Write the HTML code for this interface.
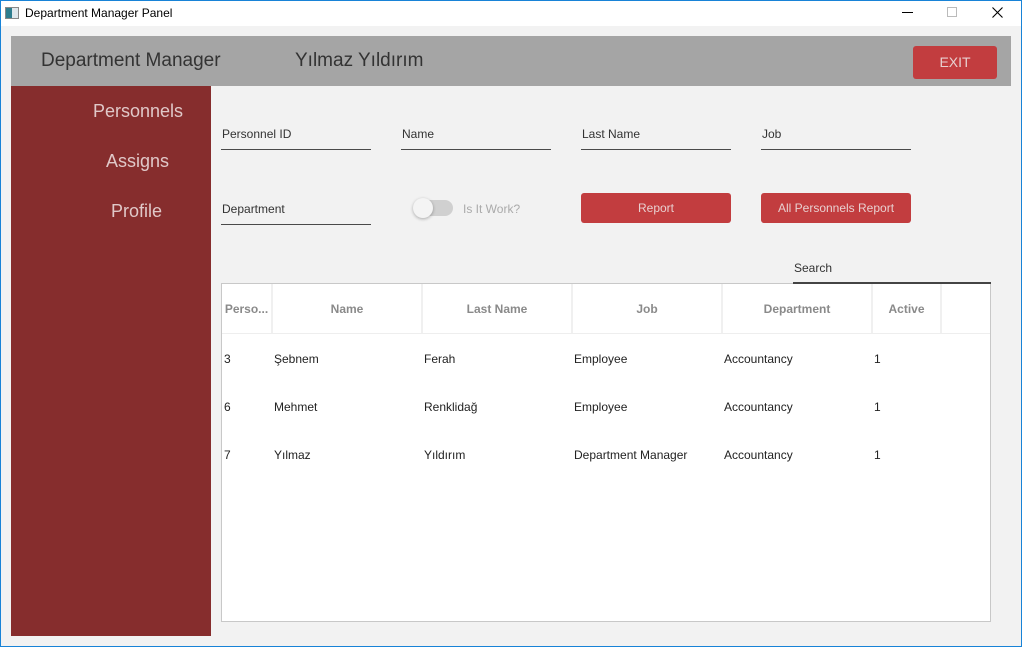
<!DOCTYPE html>
<html><head><meta charset="utf-8"><style>
*{margin:0;padding:0;box-sizing:border-box}
body{width:1022px;height:647px;position:relative;background:#f2f2f2;font-family:"Liberation Sans",sans-serif;overflow:hidden}
.a{position:absolute}
.frame{left:0;top:0;width:1022px;height:647px;border:1px solid #1883d7;pointer-events:none;z-index:10}
.title{left:0;top:0;width:1022px;height:26px;background:#fff}
.lbl{font-size:12px;color:#333}
.line{height:1px;background:#4a4a4a}
.btn{background:#c23d3f;border-radius:3px;color:#e8d0d0;font-size:12px;text-align:center;line-height:30px}
.hd{font-size:12px;font-weight:bold;color:#8a8a8a;text-align:center;top:302px}
.c{font-size:12px;color:#222}
.vsep{width:2px;background:#f0f0f0;top:284px;height:49px}
</style></head><body>
<div class="a title"></div>
<div class="a" style="left:5px;top:7px;width:14px;height:12px;border:1px solid #888;background:linear-gradient(90deg,#2e7d8e 50%,#dfe7ec 50%)"></div>
<div class="a" style="left:25px;top:6px;font-size:12px;color:#000">Department Manager Panel</div>
<div class="a" style="left:902px;top:12px;width:11px;height:1px;background:#000"></div>
<div class="a" style="left:947px;top:7px;width:10px;height:10px;border:1px solid #bbb"></div>
<svg class="a" style="left:992px;top:7px" width="11" height="11"><path d="M0.5 0.5L10.5 10.5M10.5 0.5L0.5 10.5" stroke="#000" stroke-width="1.1"/></svg>

<div class="a" style="left:11px;top:36px;width:1000px;height:50px;background:#a5a5a5"></div>
<div class="a" style="left:41px;top:50px;font-size:19px;color:#333">Department Manager</div>
<div class="a" style="left:295px;top:50px;font-size:19px;color:#333">Yılmaz Yıldırım</div>
<div class="a btn" style="left:913px;top:46px;width:84px;height:33px;line-height:33px;font-size:14px">EXIT</div>

<div class="a" style="left:11px;top:86px;width:200px;height:550px;background:#862d2d"></div>
<div class="a" style="left:93px;top:101px;font-size:18px;color:#e0c8c8">Personnels</div>
<div class="a" style="left:106px;top:151px;font-size:18px;color:#e0c8c8">Assigns</div>
<div class="a" style="left:111px;top:201px;font-size:18px;color:#e0c8c8">Profile</div>

<div class="a lbl" style="left:222px;top:127px">Personnel ID</div><div class="a line" style="left:221px;top:149px;width:150px"></div>
<div class="a lbl" style="left:402px;top:127px">Name</div><div class="a line" style="left:401px;top:149px;width:150px"></div>
<div class="a lbl" style="left:582px;top:127px">Last Name</div><div class="a line" style="left:581px;top:149px;width:150px"></div>
<div class="a lbl" style="left:762px;top:127px">Job</div><div class="a line" style="left:761px;top:149px;width:150px"></div>
<div class="a lbl" style="left:222px;top:202px">Department</div><div class="a line" style="left:221px;top:224px;width:150px"></div>

<div class="a" style="left:416px;top:200px;width:37px;height:16px;border-radius:8px;background:#d0d0d0"></div>
<div class="a" style="left:413px;top:198px;width:20px;height:20px;border-radius:10px;background:#f4f4f4;box-shadow:0 1px 3px rgba(0,0,0,.3)"></div>
<div class="a" style="left:463px;top:202px;font-size:12px;color:#aaa">Is It Work?</div>
<div class="a btn" style="left:581px;top:193px;width:150px;height:30px">Report</div>
<div class="a btn" style="left:761px;top:193px;width:150px;height:30px">All Personnels Report</div>

<div class="a lbl" style="left:794px;top:261px">Search</div>

<div class="a" style="left:221px;top:283px;width:770px;height:339px;background:#fff;border:1px solid #c8c8c8"></div>
<div class="a" style="left:793px;top:282px;width:198px;height:2px;background:#444;z-index:2"></div>
<div class="a" style="left:222px;top:333px;width:768px;height:1px;background:#eee"></div>
<div class="a vsep" style="left:271px"></div><div class="a vsep" style="left:421px"></div><div class="a vsep" style="left:571px"></div><div class="a vsep" style="left:721px"></div><div class="a vsep" style="left:871px"></div><div class="a vsep" style="left:940px"></div>
<div class="a hd" style="left:222px;width:49px">Perso...</div>
<div class="a hd" style="left:273px;width:148px">Name</div>
<div class="a hd" style="left:423px;width:148px">Last Name</div>
<div class="a hd" style="left:573px;width:148px">Job</div>
<div class="a hd" style="left:723px;width:148px">Department</div>
<div class="a hd" style="left:873px;width:67px">Active</div>

<div class="a c" style="left:224px;top:352px">3</div><div class="a c" style="left:274px;top:352px">Şebnem</div><div class="a c" style="left:424px;top:352px">Ferah</div><div class="a c" style="left:574px;top:352px">Employee</div><div class="a c" style="left:724px;top:352px">Accountancy</div><div class="a c" style="left:874px;top:352px">1</div>
<div class="a c" style="left:224px;top:400px">6</div><div class="a c" style="left:274px;top:400px">Mehmet</div><div class="a c" style="left:424px;top:400px">Renklidağ</div><div class="a c" style="left:574px;top:400px">Employee</div><div class="a c" style="left:724px;top:400px">Accountancy</div><div class="a c" style="left:874px;top:400px">1</div>
<div class="a c" style="left:224px;top:448px">7</div><div class="a c" style="left:274px;top:448px">Yılmaz</div><div class="a c" style="left:424px;top:448px">Yıldırım</div><div class="a c" style="left:574px;top:448px">Department Manager</div><div class="a c" style="left:724px;top:448px">Accountancy</div><div class="a c" style="left:874px;top:448px">1</div>

<div class="a frame"></div>
</body></html>
